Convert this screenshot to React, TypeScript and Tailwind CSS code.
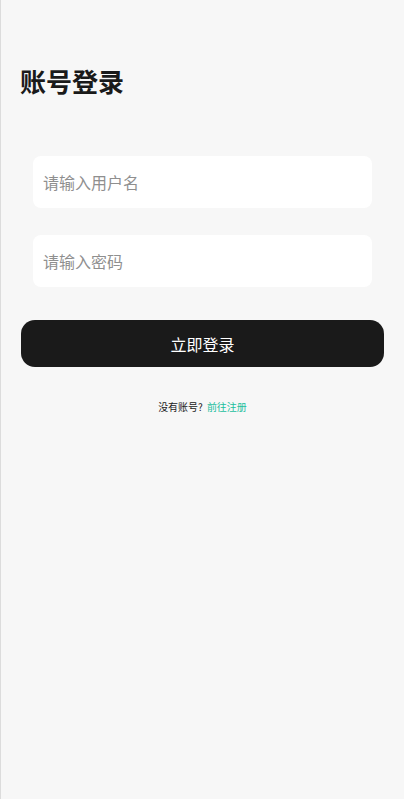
import React from "react";

export default function App() {
  return (
    <div
      className="min-h-[799px] w-full bg-[#f7f7f7] border-l border-[#dcdcdc]"
      style={{ fontFamily: '"Noto Sans CJK SC", "Noto Sans", sans-serif' }}
    >
      <div className="pt-[63px] pl-[19px]">
        <h1 className="text-[26px] leading-[36px] font-bold text-[#1a1a1a]">账号登录</h1>
      </div>
      <div className="mt-[57px] px-[32px] flex flex-col gap-[27px]">
        <input
          className="h-[52px] w-full rounded-[8px] bg-white px-[10px] text-[16px] text-[#333] placeholder:text-[#8f8f8f] outline-none"
          placeholder="请输入用户名"
        />
        <input
          type="password"
          className="h-[52px] w-full rounded-[8px] bg-white px-[10px] text-[16px] text-[#333] placeholder:text-[#8f8f8f] outline-none"
          placeholder="请输入密码"
        />
      </div>
      <div className="mt-[33px] pl-[20px] pr-[20px]">
        <button className="h-[47px] w-full rounded-[14px] bg-[#1a1a1a] text-white text-[16px]">立即登录</button>
      </div>
      <div className="mt-[33px] flex justify-center text-[10px] leading-[14px]">
        <span className="text-[#222]">没有账号?</span>
        <span className="ml-[4px] text-[#1dbf9f]">前往注册</span>
      </div>
    </div>
  );
}
